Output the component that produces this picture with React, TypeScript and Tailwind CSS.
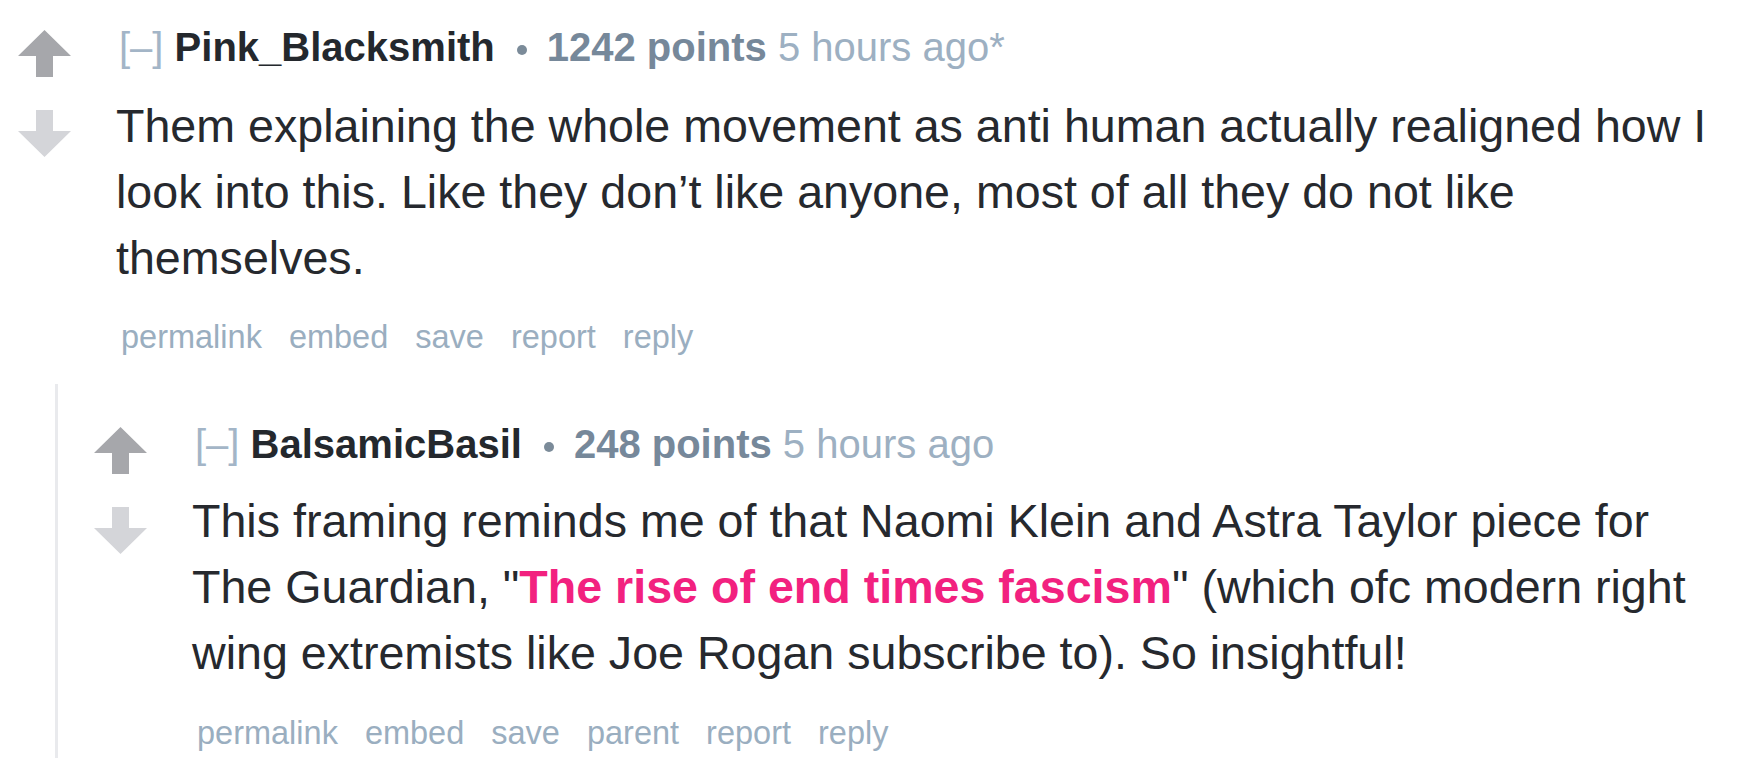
import type { ReactNode } from "react";

function UpArrow() {
  return (
    <svg width="53" height="47" viewBox="0 0 53 47" className="block">
      <polygon points="26.5,0 53,26 35,26 35,47 18,47 18,26 0,26" fill="#a6a7ab" />
    </svg>
  );
}

function DownArrow() {
  return (
    <svg width="53" height="47" viewBox="0 0 53 47" className="block">
      <polygon points="18,0 35,0 35,21 53,21 26.5,47 0,21 18,21" fill="#d4d5d9" />
    </svg>
  );
}

function Comment({
  author,
  points,
  time,
  buttons,
  body,
  padTop,
  bodyGap,
  buttonsGap,
  children,
}: {
  author: string;
  points: string;
  time: string;
  buttons: string[];
  body: ReactNode;
  padTop: string;
  bodyGap: string;
  buttonsGap: string;
  children?: ReactNode;
}) {
  return (
    <div className={padTop}>
      <div className="flex">
        <div className="w-[116px] shrink-0 pl-[18px] pt-[6px] flex flex-col gap-[33px]">
          <UpArrow />
          <DownArrow />
        </div>
        <div className="flex-1 min-w-0 pr-[8px]">
          <div className="text-[40px] leading-[46px] whitespace-nowrap pl-[3px]">
            <span className="text-[#a3b5c7]">[–]</span>{" "}
            <span className="font-bold text-[#24282d]">{author}</span>
            <span className="inline-block align-middle w-[10px] h-[10px] rounded-full bg-[#7b8b99] ml-[22px] mr-[20px]" />
            <span className="font-bold text-[#76889a]">{points}</span>{" "}
            <span className="text-[#9db0c2]">{time}</span>
          </div>
          <div className={`${bodyGap} text-[46.6px] leading-[66px] text-[#26292e]`}>{body}</div>
          <ul className={`${buttonsGap} flex gap-[27px] pl-[5px] text-[32.5px] leading-[36px] text-[#9aaec0]`}>
            {buttons.map((b) => (
              <li key={b}>{b}</li>
            ))}
          </ul>
        </div>
      </div>
      {children}
    </div>
  );
}

export default function App() {
  return (
    <div className="h-screen w-full overflow-hidden bg-white font-['Liberation_Sans',Arial,sans-serif]">
      <Comment
        author="Pink_Blacksmith"
        points="1242 points"
        time="5 hours ago*"
        buttons={["permalink", "embed", "save", "report", "reply"]}
        padTop="pt-[24px]"
        bodyGap="mt-[23px]"
        buttonsGap="mt-[28px]"
        body={
          <p>
            Them explaining the whole movement as anti human actually realigned how I look into this. Like they
            don’t like anyone, most of all they do not like themselves.
          </p>
        }
      >
        <div className="mt-[29px] ml-[55px] border-l-[3px] border-[#e9eaed] pl-[18px] pb-[20px]">
          <Comment
            author="BalsamicBasil"
            points="248 points"
            time="5 hours ago"
            buttons={["permalink", "embed", "save", "parent", "report", "reply"]}
            padTop="pt-[37px]"
            bodyGap="mt-[21px]"
            buttonsGap="mt-[29px]"
            body={
              <p>
                This framing reminds me of that Naomi Klein and Astra Taylor piece for The Guardian, "
                <a className="font-bold text-[#f2217f]">The rise of end times fascism</a>" (which ofc modern right
                wing extremists like Joe Rogan subscribe to). So insightful!
              </p>
            }
          />
        </div>
      </Comment>
    </div>
  );
}
